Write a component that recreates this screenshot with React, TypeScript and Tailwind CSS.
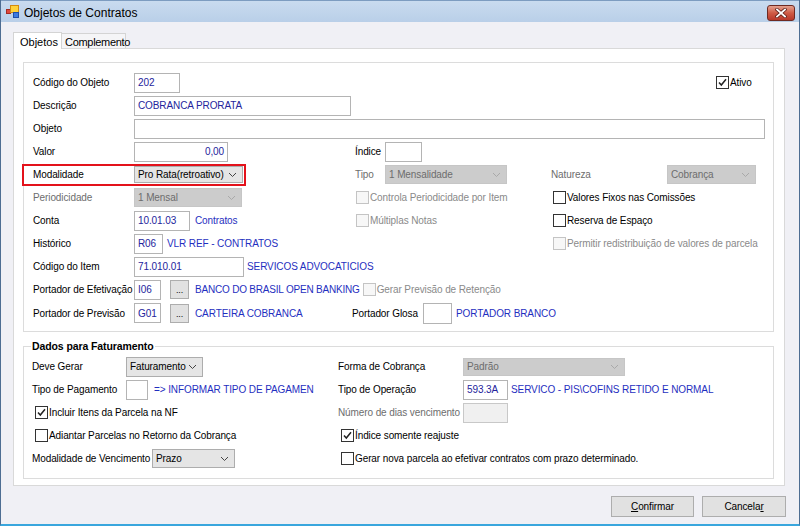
import React from 'react';

const BLUE = 'text-[#1f2fc0]';

const Chevron = ({ disabled }: { disabled?: boolean }) => (
  <svg width="9" height="6" viewBox="0 0 9 6" className="shrink-0">
    <path d="M1 1 L4.5 4.5 L8 1" fill="none" stroke={disabled ? '#a9a9a9' : '#444'} strokeWidth="1" />
  </svg>
);

const TextBox = ({
  w,
  value = '',
  disabled,
  align = 'left',
  h = 'h-[20px]',
}: {
  w: string;
  value?: string;
  disabled?: boolean;
  align?: 'left' | 'right';
  h?: string;
}) => (
  <div
    className={`${w} ${h} shrink-0 flex items-center px-[3px] border ${
      disabled ? 'bg-[#f0f0f0] border-[#c8c8c8]' : 'bg-white border-[#b4b4b4]'
    } ${align === 'right' ? 'justify-end' : ''} text-[#24249c] overflow-hidden`}
  >
    {value}
  </div>
);

const Combo = ({
  w,
  value,
  disabled,
  h = 'h-[19px]',
}: {
  w: string;
  value: string;
  disabled?: boolean;
  h?: string;
}) => (
  <div
    className={`${w} ${h} shrink-0 flex items-center justify-between pl-[3px] pr-[5px] border ${
      disabled ? 'bg-[#cccccc] border-[#c6c6c6] text-[#6d6d6d]' : 'bg-[#e5e5e5] border-[#adadad] text-black'
    } overflow-hidden`}
  >
    <span>{value}</span>
    <Chevron disabled={disabled} />
  </div>
);

const Check = ({
  label,
  checked,
  disabled,
}: {
  label: string;
  checked?: boolean;
  disabled?: boolean;
}) => (
  <div className="flex items-center">
    <span
      className={`w-[13px] h-[13px] shrink-0 border flex items-center justify-center ${
        disabled ? 'border-[#c4c4c4] bg-[#f7f7f7]' : 'border-[#333333] bg-white'
      }`}
    >
      {checked && (
        <svg width="11" height="11" viewBox="0 0 11 11">
          <path d="M2 5.5 L4.3 8 L9 2.2" fill="none" stroke="#222" strokeWidth="1.5" />
        </svg>
      )}
    </span>
    <span className={`ml-[1px] ${disabled ? 'text-[#8a8a8a]' : 'text-black'}`}>{label}</span>
  </div>
);

const Dots = () => (
  <div className="w-[19px] h-[19px] shrink-0 bg-[#e1e1e1] border border-[#adadad] flex items-end justify-center pb-[3px] text-[9px] leading-none">
    ...
  </div>
);

const Row = ({ children, h = 'h-[23px]' }: { children: React.ReactNode; h?: string }) => (
  <div className={`flex items-center ${h}`}>{children}</div>
);

const App = () => {
  return (
    <div className="w-[800px] h-[526px] flex flex-col bg-[#f0f0f5] border-x border-[#4d6d92] border-b-2 border-b-[#39a6dd] overflow-hidden font-['Liberation_Sans',Arial,sans-serif] text-[10px] tracking-[-0.1px] whitespace-nowrap text-black">
      {/* Title bar */}
      <div className="h-[22px] shrink-0 flex items-start bg-gradient-to-b from-[#c9dbef] to-[#b9cfe8] border-t border-[#7d9cc0] pl-[5px] pr-[4px]">
        <svg width="14" height="13" viewBox="0 0 14 13" className="mt-[4px]">
          <rect x="0.5" y="4.5" width="4" height="4" fill="#e0483c" stroke="#a52a22" />
          <rect x="4.5" y="0.5" width="8" height="7" fill="#ffd23a" stroke="#d28a10" />
          <rect x="7.5" y="7.5" width="5" height="5" fill="#3d7be0" stroke="#1f4fa8" />
        </svg>
        <span className="ml-[4px] mt-[3px] text-[12px] tracking-normal text-black">Objetos de Contratos</span>
        <div className="ml-auto mt-[4px] w-[28px] h-[16px] rounded-[3px] border border-[#6e2a22] bg-gradient-to-b from-[#e3a08f] via-[#cf5b45] to-[#b8382a] flex items-center justify-center">
          <svg width="12" height="10" viewBox="0 0 12 10">
            <path d="M2 1.5 L10 8.5 M10 1.5 L2 8.5" stroke="#5a1d16" strokeWidth="3.4" strokeLinecap="square" />
            <path d="M2 1.5 L10 8.5 M10 1.5 L2 8.5" stroke="#ffffff" strokeWidth="1.8" strokeLinecap="square" />
          </svg>
        </div>
      </div>

      {/* Body */}
      <div className="flex-1 flex flex-col px-[12px] pt-[9px]">
        {/* Tabs */}
        <div className="h-[17px] flex items-end">
          <div className="h-[17px] w-[49px] bg-white border border-b-0 border-[#d4d4d4] pl-[6px] pt-[1px] text-[11px] tracking-normal relative top-[1px]">
            Objetos
          </div>
          <div className="h-[15px] w-[64px] bg-[#f5f5f7] border border-b-0 border-l-0 border-[#d4d4d4] pl-[3px] text-[11px] tracking-[-0.3px]">
            Complemento
          </div>
        </div>

        {/* Tab page */}
        <div className="w-[772px] h-[438px] bg-white border border-[#d9d9d9] pl-[9px] pt-[13px]">
          {/* Group 1 */}
          <div className="w-[751px] h-[270px] border border-[#dcdcdc] pl-[9px] pt-[8px]">
            <Row>
              <span className="w-[101px] shrink-0">Código do Objeto</span>
              <TextBox w="w-[46px]" value="202" />
              <div className="ml-[536px]">
                <Check label="Ativo" checked />
              </div>
            </Row>
            <Row>
              <span className="w-[101px] shrink-0">Descrição</span>
              <TextBox w="w-[217px]" value="COBRANCA PRORATA" />
            </Row>
            <Row>
              <span className="w-[101px] shrink-0">Objeto</span>
              <TextBox w="w-[631px]" />
            </Row>
            <Row>
              <span className="w-[101px] shrink-0">Valor</span>
              <TextBox w="w-[94px]" value="0,00" align="right" />
              <span className="ml-[127px] w-[30px] shrink-0">Índice</span>
              <TextBox w="w-[37px]" />
            </Row>
            <Row>
              <div className="-ml-[11px] w-[224px] h-[22px] shrink-0 border-2 border-[#e3121b] flex items-center pl-[9px]">
                <span className="w-[101px] shrink-0">Modalidade</span>
                <Combo w="w-[109px]" h="h-[17px]" value="Pro Rata(retroativo)" />
              </div>
              <span className="ml-[109px] w-[30px] shrink-0 text-[#6d6d6d]">Tipo</span>
              <Combo w="w-[122px]" value="1 Mensalidade" disabled />
              <span className="ml-[44px] w-[116px] shrink-0 text-[#6d6d6d]">Natureza</span>
              <Combo w="w-[89px]" value="Cobrança" disabled />
            </Row>
            <Row>
              <div className="w-[323px] shrink-0 flex items-center">
                <span className="w-[101px] shrink-0 text-[#6d6d6d]">Periodicidade</span>
                <Combo w="w-[108px]" value="1  Mensal" disabled />
              </div>
              <div className="w-[197px] shrink-0">
                <Check label="Controla Periodicidade por Item" disabled />
              </div>
              <Check label="Valores Fixos nas Comissões" />
            </Row>
            <Row>
              <div className="w-[323px] shrink-0 flex items-center">
                <span className="w-[101px] shrink-0">Conta</span>
                <TextBox w="w-[56px]" value="10.01.03" />
                <span className={`ml-[5px] ${BLUE}`}>Contratos</span>
              </div>
              <div className="w-[197px] shrink-0">
                <Check label="Múltiplas Notas" disabled />
              </div>
              <Check label="Reserva de Espaço" />
            </Row>
            <Row>
              <div className="w-[323px] shrink-0 flex items-center">
                <span className="w-[101px] shrink-0">Histórico</span>
                <TextBox w="w-[29px]" value="R06" />
                <span className={`ml-[4px] ${BLUE}`}>VLR REF - CONTRATOS</span>
              </div>
              <div className="w-[197px] shrink-0" />
              <Check label="Permitir redistribuição de valores de parcela" disabled />
            </Row>
            <Row>
              <span className="w-[101px] shrink-0">Código do Item</span>
              <TextBox w="w-[110px]" value="71.010.01" />
              <span className={`ml-[3px] ${BLUE}`}>SERVICOS ADVOCATICIOS</span>
            </Row>
            <Row>
              <span className="w-[101px] shrink-0">Portador de Efetivação</span>
              <TextBox w="w-[27px]" value="I06" />
              <div className="ml-[9px]">
                <Dots />
              </div>
              <span className={`ml-[6px] tracking-[-0.2px] ${BLUE}`}>BANCO DO BRASIL OPEN BANKING</span>
              <div className="ml-[3px]">
                <Check label="Gerar Previsão de  Retenção" disabled />
              </div>
            </Row>
            <Row h="h-[24px]">
              <div className="w-[319px] shrink-0 flex items-center">
                <span className="w-[101px] shrink-0">Portador de Previsão</span>
                <TextBox w="w-[27px]" value="G01" />
                <div className="ml-[9px]">
                  <Dots />
                </div>
                <span className={`ml-[6px] ${BLUE}`}>CARTEIRA COBRANCA</span>
              </div>
              <span className="w-[71px] shrink-0">Portador Glosa</span>
              <TextBox w="w-[29px]" h="h-[21px]" />
              <span className={`ml-[4px] ${BLUE}`}>PORTADOR BRANCO</span>
            </Row>
          </div>

          {/* Group 2 */}
          <div className="relative mt-[14px] w-[751px] h-[133px] border border-[#dcdcdc] pl-[8px] pt-[8px]">
            <span className="absolute -top-[7px] left-[7px] bg-white px-[1px] font-bold text-[10.5px] leading-[12px]">
              Dados para Faturamento
            </span>
            <Row>
              <div className="w-[306px] shrink-0 flex items-center">
                <span className="w-[94px] shrink-0">Deve Gerar</span>
                <Combo w="w-[77px]" value="Faturamento" h="h-[20px]" />
              </div>
              <span className="w-[125px] shrink-0">Forma de Cobrança</span>
              <Combo w="w-[162px]" value="Padrão" disabled h="h-[18px]" />
            </Row>
            <Row>
              <div className="w-[306px] shrink-0 flex items-center">
                <span className="w-[94px] shrink-0">Tipo de Pagamento</span>
                <TextBox w="w-[22px]" />
                <span className={`ml-[6px] ${BLUE}`}>=&gt; INFORMAR TIPO DE PAGAMEN</span>
              </div>
              <span className="w-[125px] shrink-0">Tipo de Operação</span>
              <TextBox w="w-[45px]" value="593.3A" />
              <span className={`ml-[3px] ${BLUE}`}>SERVICO - PIS\COFINS RETIDO E NORMAL</span>
            </Row>
            <Row>
              <div className="w-[306px] shrink-0 flex items-center pl-[3px]">
                <Check label="Incluir Itens da Parcela na NF" checked />
              </div>
              <span className="w-[125px] shrink-0 text-[#6d6d6d]">Número de dias vencimento</span>
              <TextBox w="w-[45px]" disabled />
            </Row>
            <Row>
              <div className="w-[306px] shrink-0 flex items-center pl-[3px]">
                <Check label="Adiantar Parcelas no Retorno da Cobrança" />
              </div>
              <div className="pl-[3px]">
                <Check label="Índice somente reajuste" checked />
              </div>
            </Row>
            <Row>
              <div className="w-[306px] shrink-0 flex items-center">
                <span className="w-[120px] shrink-0">Modalidade de Vencimento</span>
                <Combo w="w-[83px]" value="Prazo" />
              </div>
              <div className="pl-[3px]">
                <Check label="Gerar nova parcela ao efetivar contratos com prazo determinado." />
              </div>
            </Row>
          </div>
        </div>

        {/* Buttons */}
        <div className="mt-[10px] flex justify-end gap-[8px] pr-[1px]">
          <button className="w-[83px] h-[21px] bg-[#e1e1e1] border border-[#adadad] text-[10px]">
            <span className="underline">C</span>onfirmar
          </button>
          <button className="w-[84px] h-[21px] bg-[#e1e1e1] border border-[#adadad] text-[10px]">
            Cancela<span className="underline">r</span>
          </button>
        </div>
      </div>
    </div>
  );
};

export default App;
